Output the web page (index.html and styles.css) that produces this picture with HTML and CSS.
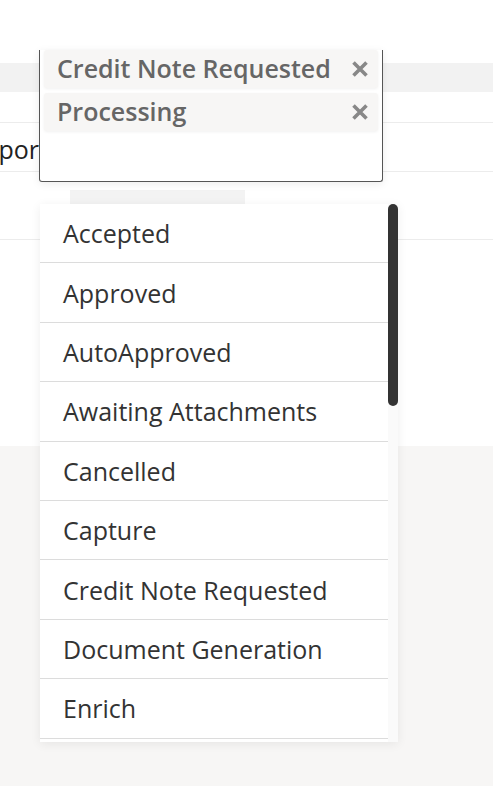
FILE: index.html
```html
<!DOCTYPE html>
<html lang="en">
<head>
    <meta charset="UTF-8">
    <meta name="viewport" content="width=device-width, initial-scale=1.0">
    <title>Status Filter</title>
    <link rel="stylesheet" href="styles.css">
</head>
<body>
    <div class="page">
        <header class="topbar"></header>
        <div class="toolbar"></div>
        <section class="table">
            <div class="row row-head"></div>
            <div class="row row-text"><span class="cell-text">Report</span></div>
            <div class="row row-tall"><span class="pill"></span></div>
            <div class="table-rest"></div>
        </section>

        <div class="select-box">
            <div class="tag">
                <span>Credit Note Requested</span>
                <svg class="tag-remove" width="16" height="16" viewBox="0 0 16 16">
                    <path d="M1.5 1.5 L14.5 14.5 M14.5 1.5 L1.5 14.5" stroke="#888" stroke-width="3.6" stroke-linecap="butt"/>
                </svg>
            </div>
            <div class="tag">
                <span>Processing</span>
                <svg class="tag-remove" width="16" height="16" viewBox="0 0 16 16">
                    <path d="M1.5 1.5 L14.5 14.5 M14.5 1.5 L1.5 14.5" stroke="#888" stroke-width="3.6" stroke-linecap="butt"/>
                </svg>
            </div>
        </div>

        <div class="dropdown">
            <ul class="options">
                <li>Accepted</li>
                <li>Approved</li>
                <li>AutoApproved</li>
                <li>Awaiting Attachments</li>
                <li>Cancelled</li>
                <li>Capture</li>
                <li>Credit Note Requested</li>
                <li>Document Generation</li>
                <li>Enrich</li>
            </ul>
            <div class="scroll-track"><div class="scroll-thumb"></div></div>
        </div>
    </div>
</body>
</html>
```

FILE: styles.css
```css
body {
    margin: 0;
    font-family: 'Open Sans', 'Noto Sans', sans-serif;
    background-color: #f7f6f5;
}
.page {
    position: relative;
    width: 493px;
    height: 786px;
    overflow: hidden;
}
.topbar {
    height: 63px;
    background-color: #ffffff;
}
.toolbar {
    height: 29px;
    background-color: #f2f2f2;
}
.table {
    background-color: #ffffff;
}
.row {
    border-bottom: 1px solid #ececec;
    box-sizing: border-box;
}
.row-head {
    height: 31px;
}
.row-text {
    height: 49px;
    display: flex;
    align-items: center;
    padding-top: 3px;
}
.cell-text {
    margin-left: -31px;
    font-size: 25px;
    color: #222;
}
.row-tall {
    height: 68px;
    padding-top: 18px;
}
.pill {
    display: block;
    margin-left: 70px;
    width: 175px;
    height: 28px;
    background-color: #f3f3f3;
}
.table-rest {
    height: 206px;
}
.select-box {
    position: absolute;
    left: 39px;
    top: 50px;
    width: 344px;
    height: 132px;
    box-sizing: border-box;
    border: 1px solid #555;
    border-top: none;
    border-radius: 0 0 3px 3px;
    background-color: #ffffff;
    box-shadow: 0 2px 8px rgba(0, 0, 0, 0.08);
    padding: 0 4px;
    display: flex;
    flex-direction: column;
    gap: 5px;
}
.tag {
    height: 38px;
    display: flex;
    align-items: center;
    justify-content: space-between;
    padding: 0 10px 0 13px;
    background-color: #f7f6f5;
    border-radius: 3px;
    box-shadow: 0 1px 3px rgba(0, 0, 0, 0.06);
    font-size: 25px;
    font-weight: 600;
    color: #666;
}
.tag span {
    margin-top: -2px;
}
.dropdown {
    position: absolute;
    left: 40px;
    top: 204px;
    width: 358px;
    height: 538px;
    background-color: #ffffff;
    box-shadow: 0 2px 10px rgba(0, 0, 0, 0.07);
    overflow: hidden;
}
.options {
    list-style: none;
    margin: 0;
    padding: 0;
    width: 348px;
}
.options li {
    height: 59.4px;
    box-sizing: border-box;
    border-bottom: 1px solid #dcdcdc;
    padding-left: 23px;
    display: flex;
    align-items: center;
    font-size: 25px;
    color: #333;
}
.scroll-track {
    position: absolute;
    top: 0;
    right: 0;
    width: 10px;
    height: 100%;
    background-color: #fafafa;
}
.scroll-thumb {
    height: 202px;
    background-color: #333;
    border-radius: 5px;
}
```
